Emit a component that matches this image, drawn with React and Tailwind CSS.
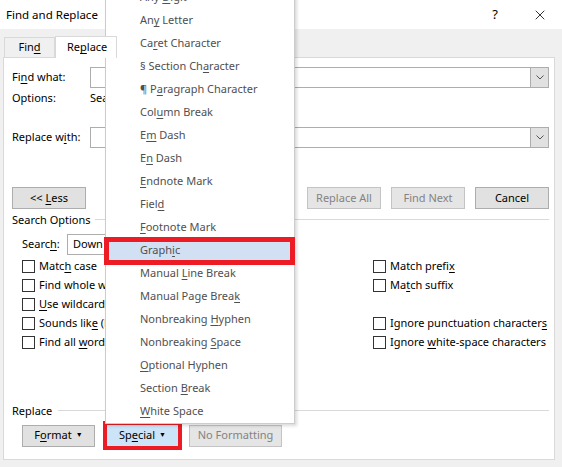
import { X } from 'lucide-react';

const font = { fontFamily: '"Noto Sans", "Open Sans", sans-serif' };

// text with one underlined mnemonic letter
function M({ t, i }) {
    if (i < 0) return <span className="whitespace-pre">{t}</span>;
    return (
        <span className="whitespace-pre">
            {t.slice(0, i)}
            <span className="underline underline-offset-2">{t[i]}</span>
            {t.slice(i + 1)}
        </span>
    );
}

function Check({ t, i }) {
    return (
        <div className="flex items-center h-[19px]">
            <span className="w-[13px] h-[13px] border border-[#333] bg-white shrink-0" />
            <span className="ml-[4px] whitespace-nowrap">
                <M t={t} i={i} />
            </span>
        </div>
    );
}

function Btn({ children, disabled, className = '' }) {
    return (
        <div
            className={`h-[22px] flex items-center justify-center border ${disabled ? 'bg-[#e5e5e5] border-[#c4c4c4] text-[#838383]' : 'bg-[#e1e1e1] border-[#adadad] text-black'} ${className}`}
        >
            {children}
        </div>
    );
}

function Combo({ className = '' }) {
    return (
        <div className={`h-[21px] flex border border-[#adadad] bg-white ${className}`}>
            <div className="flex-1" />
            <div className="w-[18px] bg-[#e1e1e1] border-l border-[#adadad] flex items-center justify-center">
                <svg width="8" height="5" viewBox="0 0 8 5">
                    <path d="M0.5 0.5 L4 4 L7.5 0.5" fill="none" stroke="#555" strokeWidth="1" />
                </svg>
            </div>
        </div>
    );
}

const items = [
    ['Any Digit', 4],
    ['Any Letter', 2],
    ['Caret Character', 2],
    ['§ Section Character', 12],
    ['¶ Paragraph Character', 3],
    ['Column Break', 3],
    ['Em Dash', 1],
    ['En Dash', 1],
    ['Endnote Mark', 0],
    ['Field', 4],
    ['Footnote Mark', 0],
    ['Graphic', 5],
    ['Manual Line Break', 7],
    ['Manual Page Break', 16],
    ['Nonbreaking Hyphen', 12],
    ['Nonbreaking Space', 12],
    ['Optional Hyphen', 0],
    ['Section Break', 8],
    ['White Space', 0],
];

export default function App() {
    return (
        <div className="relative w-[562px] h-[467px] overflow-hidden bg-[#f0f0f0] text-[11px] text-black" style={font}>
            {/* title bar */}
            <div className="h-[29px] bg-white flex items-center pl-[6px] pr-[14px] text-[11.5px]">
                <span className="flex-1">Find and Replace</span>
                <span className="text-[13px] mr-[34px]">?</span>
                <X size={16} strokeWidth={1.2} />
            </div>

            {/* tabs */}
            <div className="h-[28px] flex items-end pl-[4px]">
                <div className="w-[51px] h-[20px] border border-b-0 border-[#d9d9d9] flex items-center justify-center">
                    <M t="Find" i={3} />
                </div>
                <div className="w-[62px] h-[22px] bg-white border border-b-0 border-[#d9d9d9] flex items-center pl-[11px] -mb-px relative z-10">
                    <M t="Replace" i={2} />
                </div>
            </div>

            {/* panel */}
            <div className="ml-[3px] w-[552px] h-[403px] bg-white border border-[#d9d9d9] pl-[8px] pr-[5px]">
                <div className="flex items-center mt-[9px]">
                    <span className="w-[78px]"><M t="Find what:" i={2} /></span>
                    <Combo className="flex-1" />
                </div>
                <div className="flex items-center h-[20px]">
                    <span className="w-[78px]">Options:</span>
                    <span>Search: Down</span>
                </div>
                <div className="flex items-center mt-[19px]">
                    <span className="w-[78px]"><M t="Replace with:" i={9} /></span>
                    <Combo className="flex-1" />
                </div>

                <div className="flex mt-[39px] gap-[10px]">
                    <Btn className="w-[74px]"><span className="whitespace-pre">&lt;&lt; </span><M t="Less" i={0} /></Btn>
                    <div className="flex-1" />
                    <Btn disabled className="w-[74px]">Replace All</Btn>
                    <Btn disabled className="w-[74px]">Find Next</Btn>
                    <Btn className="w-[74px]">Cancel</Btn>
                </div>

                <div className="flex items-center mt-[1px] h-[20px]">
                    <span>Search Options</span>
                    <div className="flex-1 h-px bg-[#d9d9d9] ml-[4px] mt-[-1px]" />
                </div>

                <div className="pl-[10px]">
                    <div className="flex items-center mt-[4px] h-[21px]">
                        <span className="w-[45px]"><M t="Search:" i={5} /></span>
                        <div className="w-[100px] h-[21px] border border-[#adadad] flex items-center pl-[5px]">Down</div>
                    </div>
                    <div className="flex mt-[2px]">
                        <div className="w-[351px]">
                            <Check t="Match case" i={4} />
                            <Check t="Find whole words only" i={19} />
                            <Check t="Use wildcards" i={0} />
                            <Check t="Sounds like (English)" i={10} />
                            <Check t="Find all word forms (English)" i={9} />
                        </div>
                        <div>
                            <Check t="Match prefix" i={11} />
                            <Check t="Match suffix" i={2} />
                            <div className="h-[19px]" />
                            <Check t="Ignore punctuation characters" i={28} />
                            <Check t="Ignore white-space characters" i={7} />
                        </div>
                    </div>
                </div>

                <div className="flex items-center mt-[49px] h-[20px]">
                    <span>Replace</span>
                    <div className="flex-1 h-px bg-[#d9d9d9] ml-[6px] mt-[-1px]" />
                </div>
                <div className="flex items-center pl-[10px]">
                    <Btn className="w-[73px] h-[21px]">
                        <M t="Format" i={1} />
                        <span className="ml-[4px] text-[7px]">▼</span>
                    </Btn>
                    <div className="border-[4px] border-[#ed1c24] ml-[8px]">
                        <div className="w-[71px] h-[21px] bg-[#cce4f7] border border-[#cce4f7] flex items-center justify-center">
                            <M t="Special" i={2} />
                            <span className="ml-[4px] text-[7px]">▼</span>
                        </div>
                    </div>
                    <Btn disabled className="w-[93px] h-[21px] ml-[7px]">No Formatting</Btn>
                </div>
            </div>

            {/* special menu */}
            <div className="absolute left-[105px] top-[-15px] w-[190px] bg-white border border-[#cccccc] shadow-[2px_2px_3px_rgba(0,0,0,0.15)] text-[#505050]">
                {items.map(([t, i]) => (
                    <div
                        key={t}
                        className={`h-[23px] flex items-center pl-[34px] whitespace-nowrap ${t === 'Graphic' ? 'bg-[#d1e0f2]' : ''}`}
                    >
                        <M t={t} i={i} />
                    </div>
                ))}
            </div>
            <div className="absolute left-[104px] top-[237px] w-[191px] h-[28px] border-[5px] border-[#ed1c24]" />
        </div>
    );
}
